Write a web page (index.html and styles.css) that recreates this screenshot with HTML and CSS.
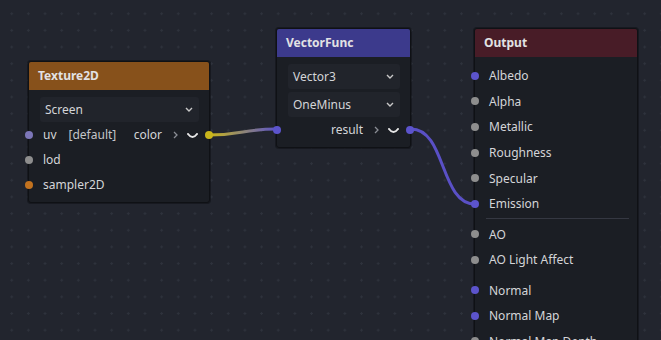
FILE: index.html
```html
<!DOCTYPE html>
<html>
<head>
<meta charset="utf-8">
<link rel="stylesheet" href="styles.css">
</head>
<body>
<div class="canvas">
  <svg class="wires" width="661" height="340" viewBox="0 0 661 340">
    <defs>
      <linearGradient id="wire1" gradientUnits="userSpaceOnUse" x1="210" y1="0" x2="277" y2="0">
        <stop offset="0" stop-color="#c9b41c"/>
        <stop offset="0.5" stop-color="#8e8577"/>
        <stop offset="1" stop-color="#5b52c9"/>
      </linearGradient>
    </defs>
    <path d="M209 135 C 243 135, 243 129, 277 129" stroke="url(#wire1)" stroke-width="3" fill="none"/>
    <path d="M411 129 C 446 129, 440 204, 475 204" stroke="#5a50c6" stroke-width="3" fill="none"/>
  </svg>

  <div class="node node-texture">
    <div class="node-header hdr-texture">Texture2D</div>
    <div class="node-body">
      <div class="selects">
        <div class="select"><span>Screen</span><svg class="chev" width="8" height="5" viewBox="0 0 8 5"><path d="M1 1 L4 4 L7 1" stroke="#c8c8c8" stroke-width="1.4" fill="none"/></svg></div>
      </div>
      <div class="row">
        <span class="port port-lavender"></span>
        <span>uv</span><span class="dflt">[default]</span>
        <span class="out"><span>color</span><svg class="arrow" width="5" height="8" viewBox="0 0 5 8"><path d="M1 1 L4 4 L1 7" stroke="#8a8d94" stroke-width="1.3" fill="none"/></svg><svg class="cup" width="11" height="6" viewBox="0 0 11 6"><path d="M1 1 Q5.5 7 10 1" stroke="#e8e8e8" stroke-width="2" fill="none" stroke-linecap="round"/></svg></span>
        <span class="port port-out port-yellow"></span>
      </div>
      <div class="row"><span class="port port-gray"></span><span>lod</span></div>
      <div class="row"><span class="port port-orange"></span><span>sampler2D</span></div>
    </div>
  </div>

  <div class="node node-vector">
    <div class="node-header hdr-vector">VectorFunc</div>
    <div class="node-body">
      <div class="selects">
        <div class="select"><span>Vector3</span><svg class="chev" width="8" height="5" viewBox="0 0 8 5"><path d="M1 1 L4 4 L7 1" stroke="#c8c8c8" stroke-width="1.4" fill="none"/></svg></div>
        <div class="select"><span>OneMinus</span><svg class="chev" width="8" height="5" viewBox="0 0 8 5"><path d="M1 1 L4 4 L7 1" stroke="#c8c8c8" stroke-width="1.4" fill="none"/></svg></div>
      </div>
      <div class="row">
        <span class="port port-purple"></span>
        <span class="out"><span>result</span><svg class="arrow" width="5" height="8" viewBox="0 0 5 8"><path d="M1 1 L4 4 L1 7" stroke="#8a8d94" stroke-width="1.3" fill="none"/></svg><svg class="cup" width="11" height="6" viewBox="0 0 11 6"><path d="M1 1 Q5.5 7 10 1" stroke="#e8e8e8" stroke-width="2" fill="none" stroke-linecap="round"/></svg></span>
        <span class="port port-out port-purple"></span>
      </div>
    </div>
  </div>

  <div class="node node-output">
    <div class="node-header hdr-output">Output</div>
    <div class="node-body body-output">
      <div class="row row-out"><span class="port port-purple"></span><span>Albedo</span></div>
      <div class="row row-out"><span class="port port-gray"></span><span>Alpha</span></div>
      <div class="row row-out"><span class="port port-gray"></span><span>Metallic</span></div>
      <div class="row row-out"><span class="port port-gray"></span><span>Roughness</span></div>
      <div class="row row-out"><span class="port port-gray"></span><span>Specular</span></div>
      <div class="row row-out"><span class="port port-purple"></span><span>Emission</span></div>
      <div class="sep"></div>
      <div class="row row-out"><span class="port port-gray"></span><span>AO</span></div>
      <div class="row row-out"><span class="port port-gray"></span><span>AO Light Affect</span></div>
      <div class="group-gap"></div>
      <div class="row row-out"><span class="port port-purple"></span><span>Normal</span></div>
      <div class="row row-out"><span class="port port-purple"></span><span>Normal Map</span></div>
      <div class="row row-out"><span class="port port-gray"></span><span>Normal Map Depth</span></div>
    </div>
  </div>
</div>
</body>
</html>
```

FILE: styles.css
```css
html, body {
  margin: 0;
  padding: 0;
  background: #22252e;
}

.canvas {
  position: relative;
  width: 661px;
  height: 340px;
  overflow: hidden;
  background-color: #22252e;
  background-image: radial-gradient(circle, #2e323c 0, #2e323c 1px, transparent 1.4px);
  background-size: 16.667px 16.667px;
  background-position: 3.4px 5.4px;
  font-family: "Noto Sans", "Open Sans", sans-serif;
  font-size: 12px;
  color: #d4d5d8;
}

.wires {
  position: absolute;
  left: 0;
  top: 0;
}

.node {
  position: absolute;
  background: #1b1e24;
  border: 1px solid #0f1115;
  border-radius: 3px;
  box-shadow: 0 0 0 1px rgba(12, 13, 17, 0.5);
}

.node-texture {
  left: 28px;
  top: 61px;
  width: 180px;
}

.node-vector {
  left: 276px;
  top: 28px;
  width: 133px;
}

.node-output {
  left: 474px;
  top: 28px;
  width: 162px;
  height: 380px;
}

.node-header {
  height: 28px;
  line-height: 27px;
  padding: 0 9px;
  font-weight: 700;
  font-size: 12px;
  color: #e2e2e4;
  border-radius: 2px 2px 0 0;
}

.hdr-texture { background: #87511b; }
.hdr-vector { background: #3c3a8c; }
.hdr-output { background: #481c27; }

.node-body {
  display: flex;
  flex-direction: column;
  padding: 7px 10px 5px 11px;
}

.body-output {
  padding: 6px 8px 0 11px;
}

.selects {
  display: flex;
  flex-direction: column;
  gap: 3px;
}

.select {
  height: 25px;
  background: #21242b;
  border-radius: 3px;
  display: flex;
  align-items: center;
  justify-content: space-between;
  padding: 0 6px 0 5px;
  color: #d4d5d8;
}

.chev {
  display: block;
}

.row {
  position: relative;
  height: 25px;
  display: flex;
  align-items: center;
  padding-left: 3px;
  white-space: nowrap;
}

.row-out {
  height: 25.6px;
}

.dflt {
  margin-left: 12px;
  color: #c4c5c9;
}

.out {
  margin-left: auto;
  display: flex;
  align-items: center;
}

.arrow {
  display: block;
  margin-left: 11px;
}

.cup {
  display: block;
  margin-left: 9px;
  margin-right: 1px;
  margin-top: 3px;
}

.port {
  position: absolute;
  left: -15px;
  top: 50%;
  width: 8px;
  height: 8px;
  margin-top: -4px;
  border-radius: 50%;
}

.port-out {
  left: auto;
  right: -14px;
}

.port-lavender { background: #7c76b8; }
.port-gray { background: #8e8e8e; }
.port-orange { background: #c2721f; }
.port-yellow { background: #c9b51c; }
.port-purple { background: #5c54cc; }

.sep {
  height: 1px;
  background: #353842;
  margin: 1px 0 3px 0;
}

.group-gap {
  height: 4.5px;
}
```
